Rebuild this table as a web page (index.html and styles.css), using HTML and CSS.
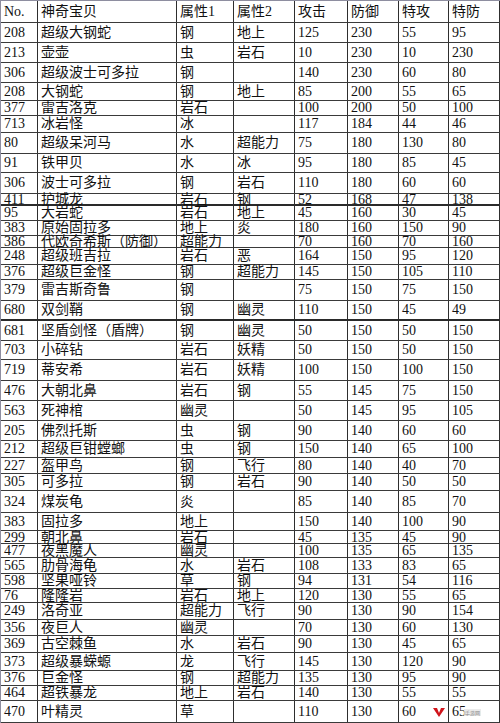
FILE: index.html
```html
<!DOCTYPE html>
<html lang="zh">
<head>
<meta charset="utf-8">
<title>神奇宝贝 防御排行</title>
<link rel="stylesheet" href="styles.css">
</head>
<body>
<div class="sheet">
  <div class="row head r22"><div class="c">No.</div><div class="c">神奇宝贝</div><div class="c">属性1</div><div class="c">属性2</div><div class="c">攻击</div><div class="c">防御</div><div class="c">特攻</div><div class="c">特防</div></div>
  <div class="row r20"><div class="c">208</div><div class="c">超级大钢蛇</div><div class="c">钢</div><div class="c">地上</div><div class="c">125</div><div class="c">230</div><div class="c">55</div><div class="c">95</div></div>
  <div class="row r20"><div class="c">213</div><div class="c">壶壶</div><div class="c">虫</div><div class="c">岩石</div><div class="c">10</div><div class="c">230</div><div class="c">10</div><div class="c">230</div></div>
  <div class="row r20"><div class="c">306</div><div class="c">超级波士可多拉</div><div class="c">钢</div><div class="c"></div><div class="c">140</div><div class="c">230</div><div class="c">60</div><div class="c">80</div></div>
  <div class="row r18"><div class="c">208</div><div class="c">大钢蛇</div><div class="c">钢</div><div class="c">地上</div><div class="c">85</div><div class="c">200</div><div class="c">55</div><div class="c">65</div></div>
  <div class="row r15"><div class="c">377</div><div class="c">雷吉洛克</div><div class="c">岩石</div><div class="c"></div><div class="c">100</div><div class="c">200</div><div class="c">50</div><div class="c">100</div></div>
  <div class="row r17"><div class="c">713</div><div class="c">冰岩怪</div><div class="c">冰</div><div class="c"></div><div class="c">117</div><div class="c">184</div><div class="c">44</div><div class="c">46</div></div>
  <div class="row r21"><div class="c">80</div><div class="c">超级呆河马</div><div class="c">水</div><div class="c">超能力</div><div class="c">75</div><div class="c">180</div><div class="c">130</div><div class="c">80</div></div>
  <div class="row r19"><div class="c">91</div><div class="c">铁甲贝</div><div class="c">水</div><div class="c">冰</div><div class="c">95</div><div class="c">180</div><div class="c">85</div><div class="c">45</div></div>
  <div class="row r21"><div class="c">306</div><div class="c">波士可多拉</div><div class="c">钢</div><div class="c">岩石</div><div class="c">110</div><div class="c">180</div><div class="c">60</div><div class="c">60</div></div>
  <div class="row r12 thick"><div class="c">411</div><div class="c">护城龙</div><div class="c">岩石</div><div class="c">钢</div><div class="c">52</div><div class="c">168</div><div class="c">47</div><div class="c">138</div></div>
  <div class="row r15"><div class="c">95</div><div class="c">大岩蛇</div><div class="c">岩石</div><div class="c">地上</div><div class="c">45</div><div class="c">160</div><div class="c">30</div><div class="c">45</div></div>
  <div class="row r15"><div class="c">383</div><div class="c">原始固拉多</div><div class="c">地上</div><div class="c">炎</div><div class="c">180</div><div class="c">160</div><div class="c">150</div><div class="c">90</div></div>
  <div class="row r12"><div class="c">386</div><div class="c">代欧奇希斯（防御）</div><div class="c">超能力</div><div class="c"></div><div class="c">70</div><div class="c">160</div><div class="c">70</div><div class="c">160</div></div>
  <div class="row r17"><div class="c">248</div><div class="c">超级班吉拉</div><div class="c">岩石</div><div class="c">恶</div><div class="c">164</div><div class="c">150</div><div class="c">95</div><div class="c">120</div></div>
  <div class="row r15"><div class="c">376</div><div class="c">超级巨金怪</div><div class="c">钢</div><div class="c">超能力</div><div class="c">145</div><div class="c">150</div><div class="c">105</div><div class="c">110</div></div>
  <div class="row r21"><div class="c">379</div><div class="c">雷吉斯奇鲁</div><div class="c">钢</div><div class="c"></div><div class="c">75</div><div class="c">150</div><div class="c">75</div><div class="c">150</div></div>
  <div class="row r20 thick"><div class="c">680</div><div class="c">双剑鞘</div><div class="c">钢</div><div class="c">幽灵</div><div class="c">110</div><div class="c">150</div><div class="c">45</div><div class="c">49</div></div>
  <div class="row r20"><div class="c">681</div><div class="c">坚盾剑怪（盾牌）</div><div class="c">钢</div><div class="c">幽灵</div><div class="c">50</div><div class="c">150</div><div class="c">50</div><div class="c">150</div></div>
  <div class="row r19"><div class="c">703</div><div class="c">小碎钻</div><div class="c">岩石</div><div class="c">妖精</div><div class="c">50</div><div class="c">150</div><div class="c">50</div><div class="c">150</div></div>
  <div class="row r21"><div class="c">719</div><div class="c">蒂安希</div><div class="c">岩石</div><div class="c">妖精</div><div class="c">100</div><div class="c">150</div><div class="c">100</div><div class="c">150</div></div>
  <div class="row r20"><div class="c">476</div><div class="c">大朝北鼻</div><div class="c">岩石</div><div class="c">钢</div><div class="c">55</div><div class="c">145</div><div class="c">75</div><div class="c">150</div></div>
  <div class="row r20"><div class="c">563</div><div class="c">死神棺</div><div class="c">幽灵</div><div class="c"></div><div class="c">50</div><div class="c">145</div><div class="c">95</div><div class="c">105</div></div>
  <div class="row r20"><div class="c">205</div><div class="c">佛烈托斯</div><div class="c">虫</div><div class="c">钢</div><div class="c">90</div><div class="c">140</div><div class="c">60</div><div class="c">60</div></div>
  <div class="row r17"><div class="c">212</div><div class="c">超级巨钳螳螂</div><div class="c">虫</div><div class="c">钢</div><div class="c">150</div><div class="c">140</div><div class="c">65</div><div class="c">100</div></div>
  <div class="row r16"><div class="c">227</div><div class="c">盔甲鸟</div><div class="c">钢</div><div class="c">飞行</div><div class="c">80</div><div class="c">140</div><div class="c">40</div><div class="c">70</div></div>
  <div class="row r17"><div class="c">305</div><div class="c">可多拉</div><div class="c">钢</div><div class="c">岩石</div><div class="c">90</div><div class="c">140</div><div class="c">50</div><div class="c">50</div></div>
  <div class="row r22"><div class="c">324</div><div class="c">煤炭龟</div><div class="c">炎</div><div class="c"></div><div class="c">85</div><div class="c">140</div><div class="c">85</div><div class="c">70</div></div>
  <div class="row r18"><div class="c">383</div><div class="c">固拉多</div><div class="c">地上</div><div class="c"></div><div class="c">150</div><div class="c">140</div><div class="c">100</div><div class="c">90</div></div>
  <div class="row r13"><div class="c">299</div><div class="c">朝北鼻</div><div class="c">岩石</div><div class="c"></div><div class="c">45</div><div class="c">135</div><div class="c">45</div><div class="c">90</div></div>
  <div class="row r14"><div class="c">477</div><div class="c">夜黑魔人</div><div class="c">幽灵</div><div class="c"></div><div class="c">100</div><div class="c">135</div><div class="c">65</div><div class="c">135</div></div>
  <div class="row r16"><div class="c">565</div><div class="c">肋骨海龟</div><div class="c">水</div><div class="c">岩石</div><div class="c">108</div><div class="c">133</div><div class="c">83</div><div class="c">65</div></div>
  <div class="row r15"><div class="c">598</div><div class="c">坚果哑铃</div><div class="c">草</div><div class="c">钢</div><div class="c">94</div><div class="c">131</div><div class="c">54</div><div class="c">116</div></div>
  <div class="row r14"><div class="c">76</div><div class="c">隆隆岩</div><div class="c">岩石</div><div class="c">地上</div><div class="c">120</div><div class="c">130</div><div class="c">55</div><div class="c">65</div></div>
  <div class="row r17"><div class="c">249</div><div class="c">洛奇亚</div><div class="c">超能力</div><div class="c">飞行</div><div class="c">90</div><div class="c">130</div><div class="c">90</div><div class="c">154</div></div>
  <div class="row r16"><div class="c">356</div><div class="c">夜巨人</div><div class="c">幽灵</div><div class="c"></div><div class="c">70</div><div class="c">130</div><div class="c">60</div><div class="c">130</div></div>
  <div class="row r17"><div class="c">369</div><div class="c">古空棘鱼</div><div class="c">水</div><div class="c">岩石</div><div class="c">90</div><div class="c">130</div><div class="c">45</div><div class="c">65</div></div>
  <div class="row r18"><div class="c">373</div><div class="c">超级暴蝾螈</div><div class="c">龙</div><div class="c">飞行</div><div class="c">145</div><div class="c">130</div><div class="c">120</div><div class="c">90</div></div>
  <div class="row r15"><div class="c">376</div><div class="c">巨金怪</div><div class="c">钢</div><div class="c">超能力</div><div class="c">135</div><div class="c">130</div><div class="c">95</div><div class="c">90</div></div>
  <div class="row r15"><div class="c">464</div><div class="c">超铁暴龙</div><div class="c">地上</div><div class="c">岩石</div><div class="c">140</div><div class="c">130</div><div class="c">55</div><div class="c">55</div></div>
  <div class="row r22"><div class="c">470</div><div class="c">叶精灵</div><div class="c">草</div><div class="c"></div><div class="c">110</div><div class="c">130</div><div class="c">60</div><div class="c">65</div></div>
  <div class="mark">
    <svg class="mark-logo" viewBox="0 0 14 12" width="14" height="12"><path d="M1 2 L5 2 L7 7 L9 2 L13 2 L7 11 Z" fill="#d0141b"/></svg>
    <span class="mark-text">手游网</span>
  </div>
</div>
</body>
</html>
```
FILE: styles.css
```css
html, body {
  margin: 0;
  padding: 0;
  background: #ffffff;
}
.sheet {
  position: relative;
  width: 500px;
  box-sizing: border-box;
  border-top: 1px solid #8e8ea0;
  border-left: 1px solid #8e8ea0;
  font-family: "Liberation Serif", "Noto Sans CJK SC", serif;
  font-size: 14px;
  color: #111111;
}
.row {
  display: grid;
  grid-template-columns: 37px 139px 57px 61px 53px 51px 50px 51px;
  box-sizing: border-box;
  border-bottom: 1px solid #3a3a3a;
}
.row.thick {
  border-bottom: 2px solid #2a2a2a;
}
.c {
  box-sizing: border-box;
  border-right: 1px solid #2e2e2e;
  padding-left: 3px;
  display: flex;
  align-items: center;
  white-space: nowrap;
  line-height: 14px;
  overflow: visible;
}
.head .c { padding-top: 1px; }
.r12 { height: 12px; }
.r12 .c { line-height: 12px; }
.r13 { height: 13px; }
.r13 .c { line-height: 13px; }
.r14 { height: 14px; }
.r15 { height: 15px; }
.r16 { height: 16px; }
.r17 { height: 17px; }
.r18 { height: 18px; }
.r19 { height: 19px; }
.r20 { height: 20px; }
.r21 { height: 21px; }
.r22 { height: 22px; }
.mark {
  position: absolute;
  left: 431px;
  top: 704px;
  display: flex;
  align-items: center;
  gap: 18px;
  height: 14px;
}
.mark-logo {
  display: block;
}
.mark-text {
  font-family: "Noto Sans CJK SC", sans-serif;
  font-size: 5px;
  color: #8a8a8a;
  background: rgba(230, 230, 230, 0.8);
  padding: 0 1px;
}
```
